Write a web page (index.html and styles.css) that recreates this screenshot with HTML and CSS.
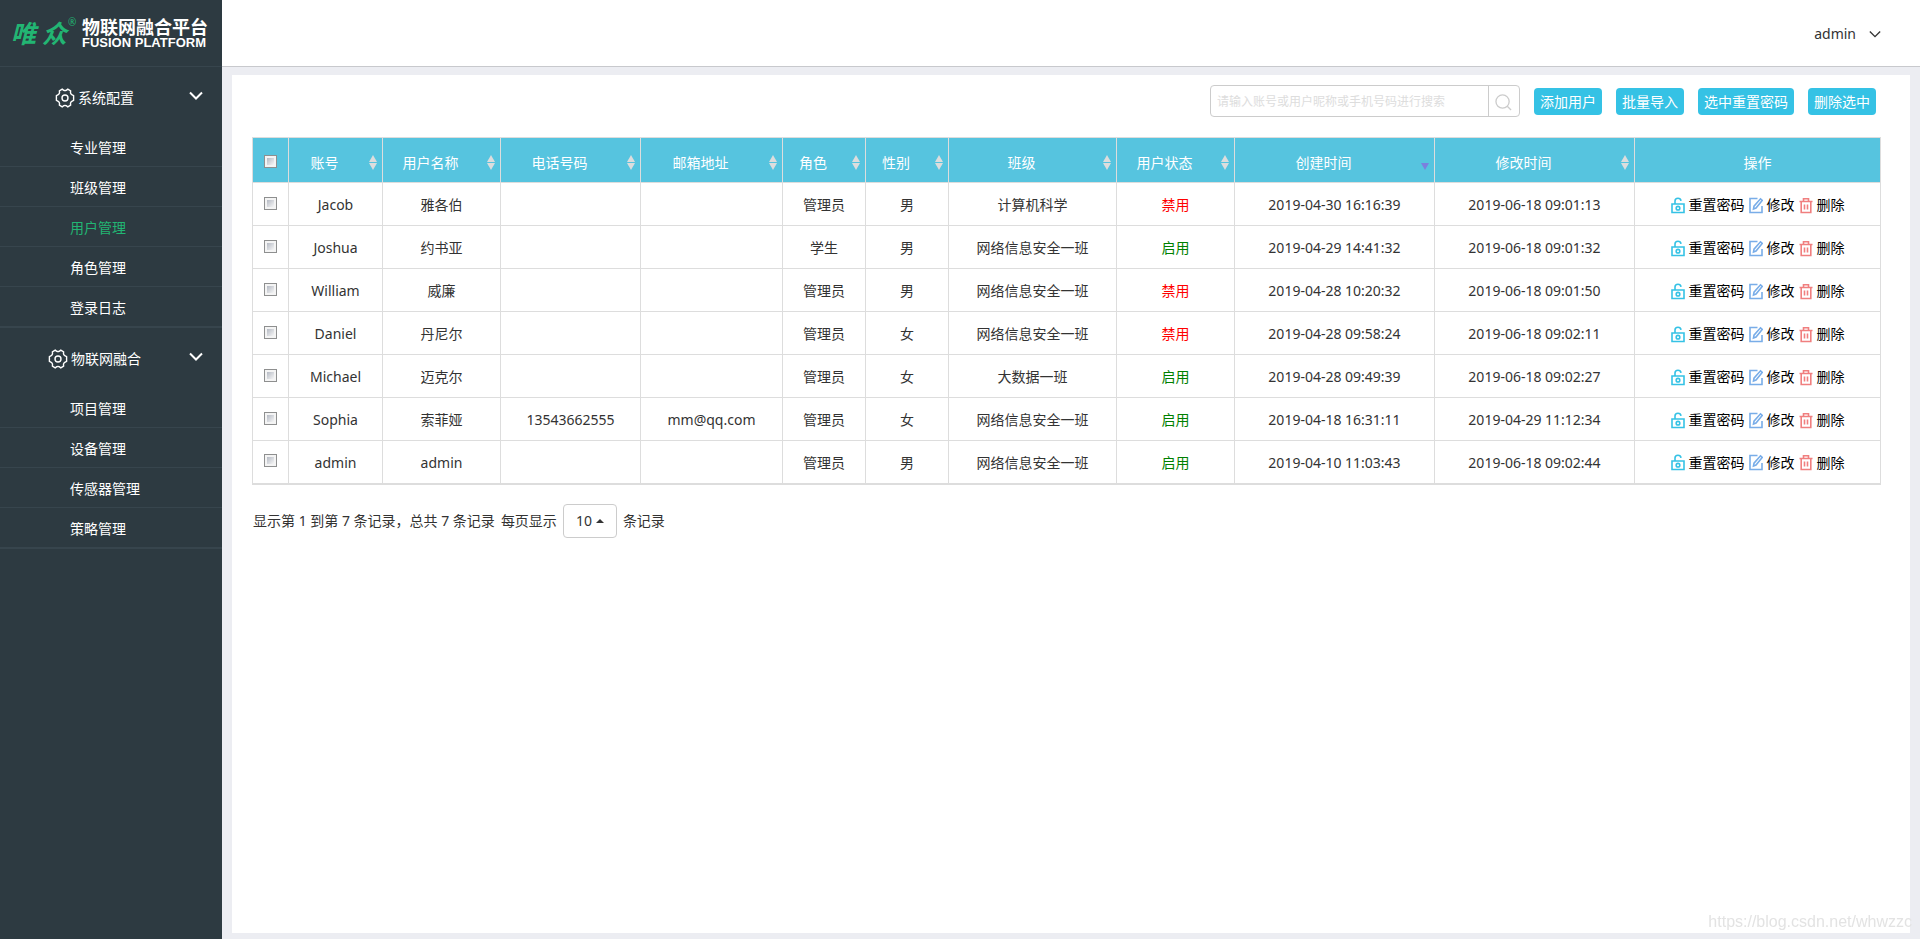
FILE: index.html
```html
<!DOCTYPE html>
<html lang="zh-CN">
<head>
<meta charset="utf-8">
<meta name="viewport" content="width=device-width, initial-scale=1">
<title>用户管理</title>
<link rel="stylesheet" href="styles.css">
</head>
<body>
<svg class="sprite" aria-hidden="true">
  <symbol id="i-gear" viewBox="0 0 20 20"><path d="M7.2 1.2 L8.8 2.3 Q10 2.8 11.2 2.3 L12.8 1.2 L15.6 2.8 L15.5 4.8 Q15.7 6 16.8 6.7 L18.6 7.6 V12.4 L16.8 13.3 Q15.7 14 15.5 15.2 L15.6 17.2 L12.8 18.8 L11.2 17.7 Q10 17.2 8.8 17.7 L7.2 18.8 L4.4 17.2 L4.5 15.2 Q4.3 14 3.2 13.3 L1.4 12.4 V7.6 L3.2 6.7 Q4.3 6 4.5 4.8 L4.4 2.8 Z"/><circle cx="10" cy="10" r="3"/></symbol>
  <symbol id="i-chev" viewBox="0 0 14 10"><path d="M1 1.5 L7 7.5 L13 1.5"/></symbol>
  <symbol id="i-lock" viewBox="0 0 14 17"><path d="M1 7 H13 V15.5 H1 Z M4 7 V4 Q4 1.2 7 1.2 Q9.6 1.2 10 3.8"/><circle cx="7" cy="11.2" r="1.8"/></symbol>
  <symbol id="i-edit" viewBox="0 0 14 17"><path d="M8.5 1.5 H1 V15.5 H13 V9"/><path d="M4.5 12 L5 9.2 L11.5 1.8 L13.2 3.4 L7 11 Z"/></symbol>
  <symbol id="i-trash" viewBox="0 0 14 17"><path d="M0.5 4.5 H13.5 M4.5 4 V1.8 H9.5 V4 M2.2 4.5 V15.5 H11.8 V4.5 M5.5 7.5 V12.5 M8.5 7.5 V12.5"/></symbol>
  <symbol id="i-search" viewBox="0 0 18 18"><circle cx="8" cy="8" r="7"/><path d="M13 13 L17 17"/></symbol>
</svg>
<div class="app">
  <aside class="sidebar">
    <a class="brand" href="#">
      <span class="brand-mark">唯<span class="brand-second">众</span><sup class="brand-reg">®</sup></span>
      <span class="brand-name"><span class="brand-cn">物联网融合平台</span><span class="brand-en">FUSION PLATFORM</span></span>
    </a>
    <nav class="menu">
      <section class="group">
        <button class="group-head" type="button"><span class="group-label"><svg class="gear"><use href="#i-gear"/></svg>系统配置</span><svg class="group-chev"><use href="#i-chev"/></svg></button>
        <a class="item" href="#">专业管理</a>
        <a class="item" href="#">班级管理</a>
        <a class="item active" href="#">用户管理</a>
        <a class="item" href="#">角色管理</a>
        <a class="item" href="#">登录日志</a>
      </section>
      <section class="group">
        <button class="group-head" type="button"><span class="group-label"><svg class="gear"><use href="#i-gear"/></svg>物联网融合</span><svg class="group-chev"><use href="#i-chev"/></svg></button>
        <a class="item" href="#">项目管理</a>
        <a class="item" href="#">设备管理</a>
        <a class="item" href="#">传感器管理</a>
        <a class="item" href="#">策略管理</a>
      </section>
    </nav>
  </aside>
  <div class="page">
    <header class="topbar">
      <button class="user" type="button">admin<svg class="user-chev"><use href="#i-chev"/></svg></button>
    </header>
    <main class="panel">
      <div class="toolbar">
        <form class="search">
          <input class="search-input" type="text" aria-label="搜索" placeholder="请输入账号或用户昵称或手机号码进行搜索">
          <button class="search-btn" type="button" aria-label="搜索"><svg class="search-icon"><use href="#i-search"/></svg></button>
        </form>
        <button class="btn" type="button">添加用户</button>
        <button class="btn" type="button">批量导入</button>
        <button class="btn" type="button">选中重置密码</button>
        <button class="btn" type="button">删除选中</button>
      </div>
      <table class="grid">
        <colgroup><col class="c-check"><col class="c-acc"><col class="c-name"><col class="c-tel"><col class="c-mail"><col class="c-role"><col class="c-role"><col class="c-class"><col class="c-name"><col class="c-made"><col class="c-made"><col class="c-ops"></colgroup>
        <thead>
          <tr><th><input class="check" type="checkbox" aria-label="全选"></th><th><div class="sort">账号</div></th><th><div class="sort">用户名称</div></th><th><div class="sort">电话号码</div></th><th><div class="sort">邮箱地址</div></th><th><div class="sort">角色</div></th><th><div class="sort">性别</div></th><th><div class="sort">班级</div></th><th><div class="sort">用户状态</div></th><th><div class="sort desc">创建时间</div></th><th><div class="sort">修改时间</div></th><th>操作</th></tr>
        </thead>
        <tbody>
          <tr><td><input class="check" type="checkbox" aria-label="Jacob"></td><td>Jacob</td><td>雅各伯</td><td></td><td></td><td>管理员</td><td>男</td><td>计算机科学</td><td class="off">禁用</td><td>2019-04-30 16:16:39</td><td>2019-06-18 09:01:13</td><td><div class="ops"><a href="#"><svg class="op lock"><use href="#i-lock"/></svg>重置密码</a><a href="#"><svg class="op edit"><use href="#i-edit"/></svg>修改</a><a href="#"><svg class="op trash"><use href="#i-trash"/></svg>删除</a></div></td></tr>
          <tr><td><input class="check" type="checkbox" aria-label="Joshua"></td><td>Joshua</td><td>约书亚</td><td></td><td></td><td>学生</td><td>男</td><td>网络信息安全一班</td><td class="on">启用</td><td>2019-04-29 14:41:32</td><td>2019-06-18 09:01:32</td><td><div class="ops"><a href="#"><svg class="op lock"><use href="#i-lock"/></svg>重置密码</a><a href="#"><svg class="op edit"><use href="#i-edit"/></svg>修改</a><a href="#"><svg class="op trash"><use href="#i-trash"/></svg>删除</a></div></td></tr>
          <tr><td><input class="check" type="checkbox" aria-label="William"></td><td>William</td><td>威廉</td><td></td><td></td><td>管理员</td><td>男</td><td>网络信息安全一班</td><td class="off">禁用</td><td>2019-04-28 10:20:32</td><td>2019-06-18 09:01:50</td><td><div class="ops"><a href="#"><svg class="op lock"><use href="#i-lock"/></svg>重置密码</a><a href="#"><svg class="op edit"><use href="#i-edit"/></svg>修改</a><a href="#"><svg class="op trash"><use href="#i-trash"/></svg>删除</a></div></td></tr>
          <tr><td><input class="check" type="checkbox" aria-label="Daniel"></td><td>Daniel</td><td>丹尼尔</td><td></td><td></td><td>管理员</td><td>女</td><td>网络信息安全一班</td><td class="off">禁用</td><td>2019-04-28 09:58:24</td><td>2019-06-18 09:02:11</td><td><div class="ops"><a href="#"><svg class="op lock"><use href="#i-lock"/></svg>重置密码</a><a href="#"><svg class="op edit"><use href="#i-edit"/></svg>修改</a><a href="#"><svg class="op trash"><use href="#i-trash"/></svg>删除</a></div></td></tr>
          <tr><td><input class="check" type="checkbox" aria-label="Michael"></td><td>Michael</td><td>迈克尔</td><td></td><td></td><td>管理员</td><td>女</td><td>大数据一班</td><td class="on">启用</td><td>2019-04-28 09:49:39</td><td>2019-06-18 09:02:27</td><td><div class="ops"><a href="#"><svg class="op lock"><use href="#i-lock"/></svg>重置密码</a><a href="#"><svg class="op edit"><use href="#i-edit"/></svg>修改</a><a href="#"><svg class="op trash"><use href="#i-trash"/></svg>删除</a></div></td></tr>
          <tr><td><input class="check" type="checkbox" aria-label="Sophia"></td><td>Sophia</td><td>索菲娅</td><td>13543662555</td><td>mm@qq.com</td><td>管理员</td><td>女</td><td>网络信息安全一班</td><td class="on">启用</td><td>2019-04-18 16:31:11</td><td>2019-04-29 11:12:34</td><td><div class="ops"><a href="#"><svg class="op lock"><use href="#i-lock"/></svg>重置密码</a><a href="#"><svg class="op edit"><use href="#i-edit"/></svg>修改</a><a href="#"><svg class="op trash"><use href="#i-trash"/></svg>删除</a></div></td></tr>
          <tr><td><input class="check" type="checkbox" aria-label="admin"></td><td>admin</td><td>admin</td><td></td><td></td><td>管理员</td><td>男</td><td>网络信息安全一班</td><td class="on">启用</td><td>2019-04-10 11:03:43</td><td>2019-06-18 09:02:44</td><td><div class="ops"><a href="#"><svg class="op lock"><use href="#i-lock"/></svg>重置密码</a><a href="#"><svg class="op edit"><use href="#i-edit"/></svg>修改</a><a href="#"><svg class="op trash"><use href="#i-trash"/></svg>删除</a></div></td></tr>
        </tbody>
      </table>
      <div class="pager">
        <span>显示第 1 到第 7 条记录，总共 7 条记录</span>
        <label for="size">每页显示</label>
        <span class="size"><select class="size-select" id="size"><option>10</option><option>25</option><option>50</option></select></span>
        <span>条记录</span>
      </div>
    </main>
  </div>
</div>
<div class="watermark">https://blog.csdn.net/whwzzc</div>
</body>
</html>
```
FILE: styles.css
```css
* { box-sizing: border-box; }
body {
  margin: 0;
  font: 14px/20px "Noto Sans", "Noto Sans CJK SC", sans-serif;
  color: #333;
  background: #ecedf2;
}
button, input, select { font: inherit; color: inherit; margin: 0; padding: 0; }
button { border: 0; background: none; cursor: pointer; }
a { color: inherit; text-decoration: none; }
svg { fill: none; stroke: currentColor; flex: none; }
.sprite { position: absolute; width: 0; height: 0; }
.app { display: flex; min-height: 100vh; }

.sidebar { flex: 0 0 222px; background: #2d3a41; color: #fff; }
.brand {
  display: flex;
  align-items: center;
  gap: 6px;
  height: 67px;
  padding-left: 11px;
  border-bottom: 1px solid #37454d;
}
.brand-mark {
  display: flex;
  width: 65px;
  font-size: 25px;
  line-height: 32px;
  font-weight: 700;
  font-style: italic;
  color: #22b573;
}
.brand-second { margin-left: 6px; }
.brand-reg { margin-left: 1px; font-size: 10px; line-height: 10px; font-style: normal; font-weight: 400; }
.brand-name { display: flex; flex-direction: column; white-space: nowrap; font-weight: 700; }
.brand-cn { font-size: 18px; line-height: 20px; }
.brand-en { font-family: "Liberation Sans", Arial, sans-serif; font-size: 13px; line-height: 12px; }

.group { border-bottom: 1px solid #37454d; }
.group-head { display: flex; align-items: center; width: 100%; height: 60px; padding: 2px 19px 0 0; }
.group-label { flex: 1; display: flex; align-items: center; justify-content: center; gap: 3px; }
.gear { width: 20px; height: 20px; stroke-width: 1.4; }
.group-chev { width: 14px; height: 10px; margin-bottom: 4px; stroke-width: 2; }
.item {
  display: block;
  height: 40px;
  padding: 2px 0 0 70px;
  line-height: 38px;
  border-bottom: 1px solid #37454d;
}
.active { color: #22b573; }

.page { flex: 1; min-width: 0; display: flex; flex-direction: column; }
.topbar {
  display: flex;
  justify-content: flex-end;
  height: 67px;
  padding: 2px 39px 0 0;
  background: #fff;
  border-bottom: 1px solid #c8c9cd;
}
.user { display: flex; align-items: center; gap: 13px; }
.user-chev { width: 12px; height: 9px; stroke-width: 1.6; }
.panel { flex: 1; margin: 8px 10px 6px; padding: 10px 31px 20px 20px; background: #fff; }

.toolbar { display: flex; justify-content: flex-end; align-items: center; gap: 14px; padding-right: 3px; }
.search {
  display: flex;
  width: 310px;
  height: 32px;
  border: 1px solid #ccc;
  border-radius: 4px;
}
.search-input { flex: 1; min-width: 0; padding: 2px 7px 0 6px; border: 0; outline: 0; background: none; font-size: 12px; }
.search-input::placeholder { color: #ddd; }
.search-btn { display: flex; align-items: center; justify-content: center; width: 31px; padding: 2px 2px 0 0; border-left: 1px solid #ccc; color: #ccc; }
.search-icon { width: 17px; height: 17px; stroke-width: 1.4; }
.btn { height: 27px; padding: 1px 6px 0; border-radius: 4px; background: #35c2e5; color: #fff; }

.grid {
  width: 100%;
  margin-top: 20px;
  table-layout: fixed;
  border-collapse: collapse;
  border: 1px solid #ddd;
  border-bottom-width: 2px;
  text-align: center;
}
.c-check { width: 36px; }
.c-acc { width: 94px; }
.c-name { width: 118px; }
.c-tel { width: 140px; }
.c-mail { width: 142px; }
.c-role { width: 83px; }
.c-class { width: 168px; }
.c-made { width: 200px; }
.c-ops { width: 246px; }
.grid th, .grid td { padding: 0; border: 1px solid #ddd; white-space: nowrap; }
.grid th { height: 45px; padding-top: 6px; background: #56c4df; color: #fff; font-weight: 400; }
.grid td { height: 43px; padding-top: 2px; }
.sort { position: relative; padding: 0 30px 0 8px; }
.sort::before, .sort::after {
  content: "";
  position: absolute;
  right: 5px;
  border: 4px solid transparent;
}
.sort::before { top: 2px; border-top: 0; border-bottom: 7px solid #ddd; }
.sort::after { top: 10px; border-bottom: 0; border-top: 7px solid #ddd; }
.desc::before { display: none; }
.desc::after { border-top-color: #7b80de; }
.check {
  appearance: none;
  display: block;
  width: 13px;
  height: 13px;
  margin: 0 auto 4px;
  border: 1px solid #8e8f8f;
  background: linear-gradient(135deg, #b5bac4, #f6f6f6) content-box, #f4f4f4;
  padding: 2px;
}
.off { color: #f00; }
.on { color: #008000; }
.ops { display: flex; justify-content: center; gap: 4px; color: #000; }
.ops a { display: flex; align-items: center; gap: 4px; }
.op { width: 14px; height: 17px; stroke-width: 1.6; }
.lock { color: #35c2e5; }
.edit { color: #79ade8; }
.trash { color: #f07f7f; }

.pager { display: flex; align-items: center; gap: 6px; margin-top: 19px; padding-left: 1px; }
.size { position: relative; display: flex; }
.size::after {
  content: "";
  position: absolute;
  right: 13px;
  top: 15px;
  border: 4px solid transparent;
  border-top: 0;
  border-bottom-color: #333;
  pointer-events: none;
}
.size-select {
  appearance: none;
  width: 54px;
  height: 34px;
  padding-left: 12px;
  border: 1px solid #ccc;
  border-radius: 4px;
  background: #fff;
}
.watermark {
  position: fixed;
  right: 8px;
  bottom: 7px;
  font: 16px/20px "Liberation Sans", Arial, sans-serif;
  color: #e3e3e3;
  pointer-events: none;
}
```
